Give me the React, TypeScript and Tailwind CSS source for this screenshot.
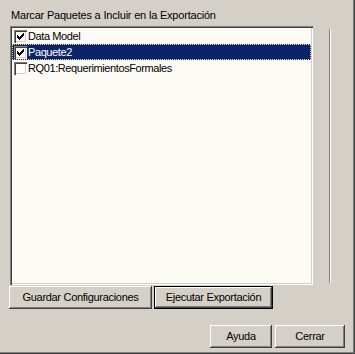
import { useState } from 'react';

const raised =
  'shadow-[inset_-1px_-1px_#404040,inset_1px_1px_#ffffff,inset_-2px_-2px_#808080,inset_2px_2px_#d4d0c8]';

function Check() {
  // classic 7x7 pixel check mark
  const rows = ['......x', '.....xx', 'x...xxx', 'xx.xxx.', 'xxxxx..', '.xxx...', '..x....'];
  return (
    <svg width="7" height="7" viewBox="0 0 7 7" shapeRendering="crispEdges">
      {rows.map((r, y) =>
        r.split('').map((c, x) => (c === 'x' ? <rect key={`${x}-${y}`} x={x} y={y} width="1" height="1" fill="#000" /> : null))
      )}
    </svg>
  );
}

function Item({ label, checked, selected }: { label: string; checked: boolean; selected?: boolean }) {
  return (
    <div
      className={`flex h-4 items-center pl-[2px] leading-4 ${
        selected ? 'bg-[#0a246a] text-white outline-1 outline-dotted outline-[#f5db95] -outline-offset-1' : 'text-black'
      }`}
    >
      <span className="flex h-[13px] w-[13px] shrink-0 items-center justify-center bg-white shadow-[inset_1px_1px_#808080,inset_2px_2px_#404040,inset_-1px_-1px_#ffffff,inset_-2px_-2px_#d4d0c8]">
        {checked && <Check />}
      </span>
      <span className="ml-px whitespace-nowrap tracking-[-0.4px]">{label}</span>
    </div>
  );
}

function Button({ children, width, isDefault }: { children: string; width: string; isDefault?: boolean }) {
  return (
    <button
      className={`${width} h-[23px] bg-[#d4d0c8] text-[11px] tracking-[-0.3px] text-black ${
        isDefault ? 'border border-black ' : ''
      }${raised}`}
    >
      {children}
    </button>
  );
}

export default function App() {
  const [items] = useState([
    { label: 'Data Model', checked: true },
    { label: 'Paquete2', checked: true, selected: true },
    { label: 'RQ01:RequerimientosFormales', checked: false },
  ]);

  return (
    <div className="flex h-[354px] w-[355px] flex-col bg-[#d4d0c8] font-['Liberation_Sans',Arial,sans-serif] text-[11px] text-black shadow-[inset_-1px_-1px_#404040,inset_-2px_-2px_#808080]">
      <div className="flex pl-[10px]">
        <div className="flex w-[303px] flex-col">
          <div className="h-[26px] whitespace-nowrap pl-px pt-[9px] leading-[13px] tracking-[-0.2px]">
            Marcar Paquetes a Incluir en la Exportación
          </div>
          <div className="h-[259px] bg-[#fcfaf4] p-[2px] shadow-[inset_1px_1px_#808080,inset_2px_2px_#404040,inset_-1px_-1px_#ffffff,inset_-2px_-2px_#d4d0c8]">
            {items.map((it) => (
              <Item key={it.label} {...it} />
            ))}
          </div>
          <div className="-ml-px mt-px flex gap-[2px]">
            <Button width="w-[143px]">Guardar Configuraciones</Button>
            <Button width="w-[119px]" isDefault>
              Ejecutar Exportación
            </Button>
          </div>
        </div>
        <div className="ml-[16px] mt-[29px] h-[254px] w-[2px] border-l border-r border-l-[#808080] border-r-white" />
      </div>
      <div className="mt-[16px] flex justify-end gap-[3px] pr-[10px]">
        <Button width="w-[62px]">Ayuda</Button>
        <Button width="w-[70px]">Cerrar</Button>
      </div>
    </div>
  );
}
